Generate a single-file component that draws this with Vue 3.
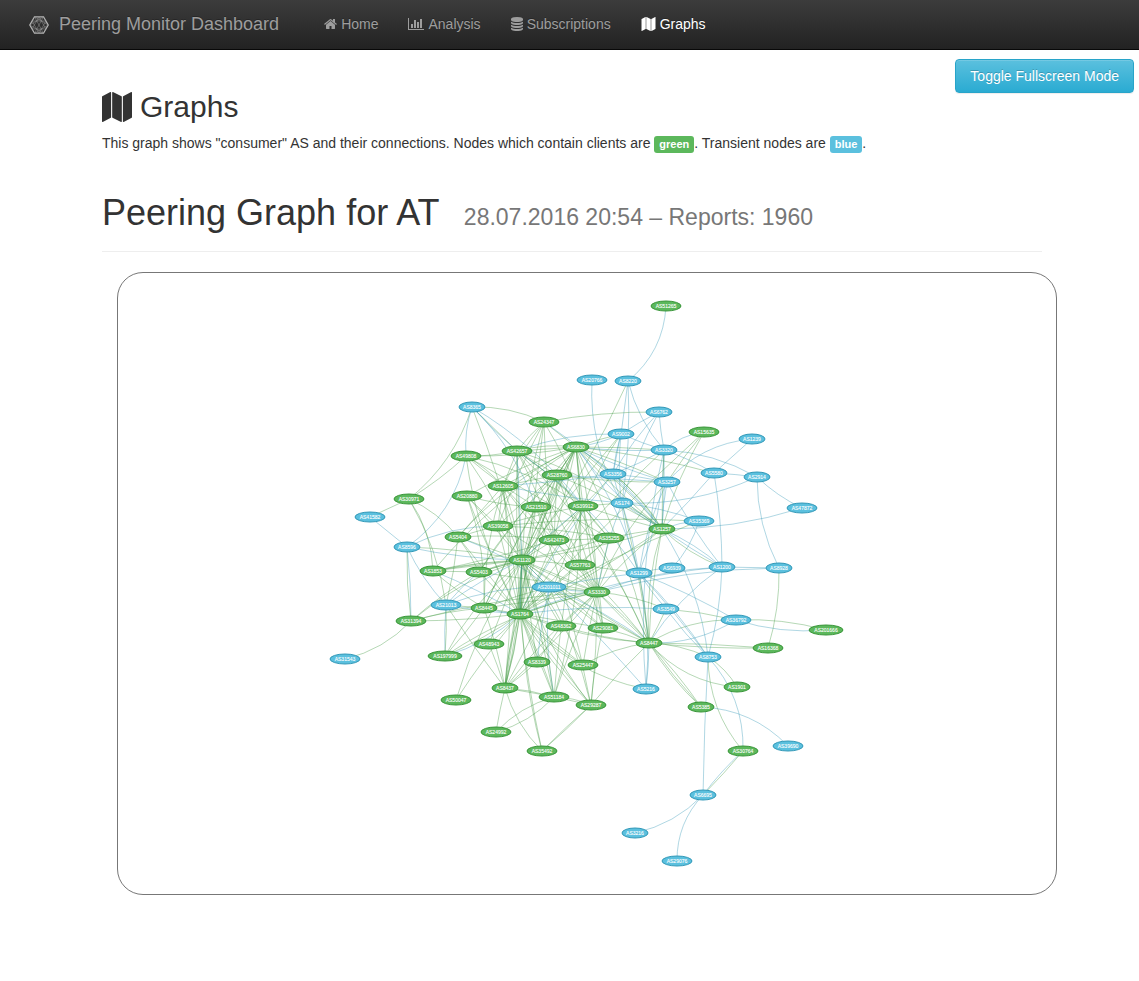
<script setup>
const icons = {
  home: {
    w: 1664, h: 1792, x: 64,
    d: 'M1472 992v480q0 26-19 45t-45 19h-384v-384h-256v384h-384q-26 0-45-19t-19-45v-480q0-1 .5-3t.5-3l575-474 575 474q1 2 1 6zm223-69l-62 74q-8 9-21 11h-3q-13 0-21-7l-692-577-692 577q-12 8-24 7-13-2-21-11l-62-74q-8-10-7-23.5t11-21.5l719-599q32-26 76-26t76 26l244 204v-195q0-14 9-23t23-9h192q14 0 23 9t9 23v408l219 182q10 8 11 21.5t-7 23.5z',
  },
  chart: {
    w: 2048, h: 1792, x: 0,
    d: 'M640 896v512h-256v-512h256zm384-512v1024h-256v-1024h256zm1024 1152v128h-2048v-1536h128v1408h1920zm-640-896v768h-256v-768h256zm384-384v1152h-256v-1152h256z',
  },
  database: {
    w: 1536, h: 1792, x: 128,
    d: 'M896 768q237 0 443-43t325-127v170q0 69-103 128t-280 93.5-385 34.5-385-34.5-280-93.5-103-128v-170q119 84 325 127t443 43zm0 768q237 0 443-43t325-127v170q0 69-103 128t-280 93.5-385 34.5-385-34.5-280-93.5-103-128v-170q119 84 325 127t443 43zm0-384q237 0 443-43t325-127v170q0 69-103 128t-280 93.5-385 34.5-385-34.5-280-93.5-103-128v-170q119 84 325 127t443 43zm0-1152q208 0 385 34.5t280 93.5 103 128v128q0 69-103 128t-280 93.5-385 34.5-385-34.5-280-93.5-103-128v-128q0-69 103-128t280-93.5 385-34.5z',
  },
  map: {
    w: 1792, h: 1792, x: 0,
    d: 'M512 0q13 0 22.5 9.5t9.5 22.5v1472q0 20-17 28l-480 256q-7 4-15 4-13 0-22.5-9.5t-9.5-22.5v-1472q0-20 17-28l480-256q7-4 15-4zM1760 0q13 0 22.5 9.5t9.5 22.5v1472q0 20-17 28l-480 256q-7 4-15 4-13 0-22.5-9.5t-9.5-22.5v-1472q0-20 17-28l480-256q7-4 15-4zM640 0q8 0 14 3l512 256q18 10 18 29v1472q0 13-9.5 22.5t-22.5 9.5q-8 0-14-3l-512-256q-18-10-18-29v-1472q0-13 9.5-22.5t22.5-9.5z',
  },
}

const links = [
  { text: 'Home', icon: icons.home, width: 13 },
  { text: 'Analysis', icon: icons.chart, width: 16 },
  { text: 'Subscriptions', icon: icons.database, width: 12 },
  { text: 'Graphs', icon: icons.map, width: 15, active: true },
]

// kind (g = has clients, b = transit only), AS number, x, y
const nodes = `
g 51265 666 306
b 20766 592 380
b 8220 628 381
b 8365 472 407
b 6762 659 412
g 24347 544 422
g 6830 576 447
b 9002 621 434
b 3320 664 450
g 15635 704 432
b 1239 752 439
b 5580 714 473
b 2914 757 477
b 47872 802 508
b 3356 613 474
b 3257 667 482
b 174 622 503
g 1257 662 529
b 35369 699 521
g 49808 466 456
g 42657 517 451
g 28760 557 475
g 12605 503 486
g 20880 467 496
g 21510 536 507
g 39912 583 506
g 30971 409 499
b 41582 370 517
g 39058 498 526
g 5404 458 537
g 42473 554 540
g 35255 609 538
b 8596 407 547
g 1120 522 560
g 57763 580 565
b 1299 639 573
b 6939 672 568
b 1200 722 567
b 8928 779 568
g 1853 433 571
g 5403 479 572
b 201011 549 587
g 3330 597 592
b 21013 446 605
g 8445 484 608
g 1764 520 614
b 3549 666 609
g 31394 411 621
g 48362 561 626
g 29081 603 628
b 36792 736 620
g 201666 826 630
g 8447 649 643
g 16368 768 648
b 8753 708 657
g 48943 489 644
b 31543 345 659
g 197999 445 656
g 8339 537 662
g 25447 583 665
b 5216 646 689
g 1901 737 687
g 8437 505 688
g 51184 554 697
g 29287 591 705
g 5385 701 707
g 50047 456 700
g 24992 496 732
g 35492 542 751
g 30764 743 751
b 39690 788 746
b 6695 703 795
b 3216 635 833
b 29076 677 861
`.trim().split('\n').map((row) => {
  const [kind, id, x, y] = row.split(' ')
  return { kind, id, x: +x, y: +y, rx: [11, 13, 15, 17][id.length - 3] }
})

const byId = Object.fromEntries(nodes.map((n) => [n.id, n]))

// kind, source, then target:bend pairs; the bend is a share of the edge's length
const edges = `
b 51265 8220:-.22
g 8365 24347:-.12 30971:-.15 42657 1120:-.03
b 8365 49808:.1 42657:.03 21510:-.12 39912:-.1
g 49808 30971:-.05 42657:.06 6830:.05 12605:-.08 39912:-.1 21510:.04 1120:-.06 1764:.1 35255
b 49808 8596:-.2
g 30971 41582 5404:-.12 1853:-.15 21013:-.1
b 41582 8596
b 8596 31394:-.03 21013:.08 1120:.05 39058:-.12
g 8596 31394:.04 1120:-.04
g 31394 31543:-.15 1764:.03 8445:-.05 1120:-.1 5403:-.05 3330:-.06
b 21013 197999:.03 1764:.04 201011:-.1 5403:-.05
g 21013 197999:-.03 8437:.02 5404:.04 8445
g 197999 1764:.05 1120:-.1 3330:-.1 8445:.03
b 197999 1764:.12
g 50047 1764:-.03 1120:-.08
g 24992 8437:-.02 51184:-.14 51184:.14
g 35492 8437:-.13 1764:-.03 1120:-.08 29287:.02 29287:-.02
g 29287 8437:.02 51184:.1 8447:-.03 1764:-.06 1120:-.12 3330:.03 29081:-.04 201011:.05
g 51184 1764:.04 1120:.02 3330:-.04 8437:.06
b 51184 201011:-.07
g 8437 1764:.03 1120:.05 3330:.04 8339:.03 48943:.02 39912:.05
b 5216 8447:.03 1299:.08 201011:.02
g 5216 1764:-.18
g 8447 16368:-.02 8753:-.1 1901:.2 5385:.03 36792:-.15 201011 1764:-.08 1120:-.02 3330:.04 29081:.04 25447:.1 42473:.03 6830:.06 1257:-.1 28760:.04
g 8447 16368:.03 5385:-.04 3330:-.02 1299:.02
g 8447 5385:.07 174:.03 3549:.02
b 8447 36792:.15 1200:-.1
g 36792 201666:-.08 3549:.04
b 36792 201666:.1 1299:.04
b 1200 8928 3330:.08 1257:-.02 5580:.04 1764:.07
b 8928 2914:-.12 3330:.06
g 8928 16368:-.08
g 8753 1901:-.12 30764:.18
b 8753 30764:-.2 6695:.01 1200:.06 1257:.12 1299:.03 3549:-.04
b 30764 6695:.05
g 30764 6695:-.02
b 5385 39690:-.2
b 6695 3216:-.15 29076:.2
b 2914 47872:.08 174:-.12 3320:.12 5580:.02
b 47872 1257:-.08
b 1239 5580 3257:.2
b 5580 1257:-.02 3320:.05
g 5580 6830:.04
g 15635 1257:.06 3257:.03 1764:.02
b 15635 3320:.15
b 3257 1257:.04 1200:.05 3356:.03 6830:-.04 1299:.08
g 3257 6830:.03 3330:.1 28760:-.04
b 35369 174:.06 1257:.08 6939:-.12
g 35369 1764:.06
b 20766 174:.15
b 8220 3356:-.03 3320:.12 174:-.05
g 8220 1120:-.06
g 6762 24347:.05
b 6762 3320:.03 3356:.06 9002:.03 174:.06
b 9002 6830:-.08 3320:.03 3356:.05 1299:.12 42657:.1
g 9002 6830:.03 39912:.06 1120:.02
b 3320 6830:-.04 3356:-.04 1257:-.03 1299:-.1 5216:.08
g 3320 1257:.01 6830:.02 1764:.06
b 3356 1257:-.04 174:.04 1764:.06 6830:.04
g 3356 39912:-.02 1257:-.1
b 174 1299:-.04 1257:.03 12605:-.03 3330:.05
g 174 39912 1257:-.05
g 1257 6830:.05 39912:-.02 35255:.02 3330:.06 1120:-.04 1764:-.03 28760:.04 42657:.09 1200:.1
b 1257 1200:-.08
g 1257 6830:-.04 8447:.04
g 6830 24347 42657 28760 12605 21510 39912 42473 1120:.02 57763:-.04 1853:.08 5403:.03 3330:-.06 8445:.05 1764:.04 8437:.1 51184:-.1 1257:-.12 20880:.05 5404:.1
g 6830 1120:-.03 42657:.1
b 6830 1257:.1 1299:-.1
g 24347 12605:.05 1120:.06 39058:.04 1764 39912:-.06 42657:.05 42473:.03
b 24347 1257:-.08
g 42657 28760 12605 1120:.02 42473:-.04 1764:.02 3330:-.04 39912:-.05 35255:-.08 8447:-.1
b 42657 1120 1299:-.1
g 28760 12605 39058:.04 42473 1120:-.02 1764:.03 3330:-.02 5403:.06
b 28760 3257
g 12605 39058 5404 1120:-.05 42473 1764 3330:.05 8445:.08 8437:-.06
b 12605 3356:.02
g 20880 1120 39058:.02 1764:.03 8445:-.1 21510:.06
g 21510 42473 1120 1764 8445:.03 57763:-.04 29287:-.04
g 39912 42473 1120 35255:.05 3330:.02 1764:.04 51184:.04 29081:-.04 39058:.03
b 39912 1120:.02
g 39058 5404:.02 1120 1764 3330:-.03 35255:-.04
g 39058 35369:-.04
g 5404 1120 5403:-.05 1764 42473:-.05
b 5404 201011:-.08
g 42473 1120 35255:.02 3330:-.02 1764:-.02 1853:-.03
g 35255 1120:-.02 57763:.03 3330 1764
g 1120 1764 57763 3330 8445 5403 1853 48943 8339 8437:-.02 51184:-.06 48362 29081:-.04 25447:-.05 201011
g 1120 1764:.04 3330:.05 1853:.04 5403:.05
g 1120 1764:-.04
b 1120 201011 1764:.02 21013:.05
g 57763 1299 3330 1764 29081:-.03
b 1299 6939:-.06 3549:.04 201011:.02 8753:-.06
g 1853 1120:-.03 8445:.04 5403
b 1853 1764:-.04
g 5403 1120 1764 3330:-.02
g 201011 3330 1764:.02 8445:.03 29081
b 201011 3330:.05 8339:.03 8447:-.06
g 3330 1764:.03 29081 8445 48362 8437:.06 25447:.02 3549:-.08
g 8445 1764 8437:-.04
b 8445 1764:.05
b 3549 1764:.05
g 1764 48362 29081 48943:-.03 8339 25447 8437:-.04 51184 29287
g 1764 25447:.07 8437:.08
g 48362 8339 8447:.05
`.trim().split('\n').flatMap((row) => {
  const [kind, source, ...targets] = row.split(' ')
  return targets.map((target) => {
    const [id, bend = 0] = target.split(':')
    const a = byId[source]
    const b = byId[id]
    const dx = b.x - a.x
    const dy = b.y - a.y
    const cx = (a.x + b.x) / 2 - dy * bend
    const cy = (a.y + b.y) / 2 + dx * bend
    return { kind, d: `M${a.x} ${a.y}Q${cx} ${cy} ${b.x} ${b.y}` }
  })
})

function toggleFullscreen() {
  if (document.fullscreenElement) document.exitFullscreen()
  else document.documentElement.requestFullscreen()
}
</script>

<template>
  <div class="page">
    <nav class="navbar">
      <a class="brand" href="#">
        <svg class="logo" viewBox="0 0 20 18" aria-hidden="true">
          <path class="rim" d="M5.5.8h9L19.2 9l-4.7 8.200h-9L.8 9z" />
          <path class="web" d="M5.5.8L19.2 9 5.5 17.2M14.5.8L.8 9l13.7 8.200M5.5.8l9 16.400M14.5.8l-9 16.400M3 5h14M3 13h14M3 5l7 12M17 5l-7 12M3 13l7-12M17 13L10 1" />
        </svg>
        <span>Peering Monitor Dashboard</span>
      </a>
      <ul class="links">
        <li v-for="link in links" :key="link.text">
          <a href="#" :class="{ active: link.active }">
            <svg
              class="nav-icon"
              :width="link.width"
              height="14"
              :viewBox="`${link.icon.x} 0 ${link.icon.w} ${link.icon.h}`"
              aria-hidden="true"
            ><path :d="link.icon.d" /></svg>
            <span>{{ link.text }}</span>
          </a>
        </li>
      </ul>
    </nav>

    <div class="toolbar">
      <button type="button" class="toggle" @click="toggleFullscreen">Toggle Fullscreen Mode</button>
    </div>

    <main class="content">
      <h2>
        <svg class="title-icon" viewBox="0 0 1792 1792" aria-hidden="true"><path :d="icons.map.d" /></svg>
        <span>Graphs</span>
      </h2>
      <p>
        This graph shows "consumer" AS and their connections. Nodes which contain clients are
        <span class="label green">green</span>. Transient nodes are
        <span class="label blue">blue</span>.
      </p>
      <h1>Peering Graph for AT <small>28.07.2016 20:54 – Reports: 1960</small></h1>

      <div class="graph">
        <svg viewBox="118 273 938 621" role="img" aria-label="Peering graph">
          <path v-for="(edge, i) in edges" :key="i" :class="['edge', edge.kind]" :d="edge.d" />
          <g v-for="node in nodes" :key="node.id" :class="['node', node.kind]">
            <ellipse :cx="node.x" :cy="node.y" :rx="node.rx" ry="5" />
            <text :x="node.x" :y="node.y + 2">AS{{ node.id }}</text>
          </g>
        </svg>
      </div>
    </main>
  </div>
</template>

<style>
body {
  margin: 0;
  background: #fff;
}
</style>

<style scoped>
.page {
  color: #333;
  font: 14px/20px "Liberation Sans", Arial, sans-serif;
}

.navbar {
  display: flex;
  align-items: center;
  box-sizing: border-box;
  min-height: 50px;
  padding: 0 15px 1px 29px;
  border-bottom: 1px solid #080808;
  background: linear-gradient(#3c3c3c, #222);
}

.navbar a {
  display: flex;
  align-items: center;
  color: #9d9d9d;
  text-decoration: none;
  text-shadow: 0 -1px 0 rgba(0, 0, 0, 0.25);
}

.navbar a.active {
  color: #fff;
}

.brand {
  gap: 10px;
  margin-right: 30px;
  font-size: 18px;
}

.logo {
  width: 20px;
  height: 18px;
  margin-top: 2px;
  fill: none;
}

.rim {
  stroke: #b4b4b4;
  stroke-width: 1.3;
}

.web {
  stroke: #999;
  stroke-width: 0.5;
}

.links {
  display: flex;
  margin: 0;
  padding: 0;
  list-style: none;
}

.links a {
  gap: 4px;
  padding: 14px 15px;
}

.nav-icon {
  fill: currentColor;
}

.toolbar {
  display: flex;
  justify-content: flex-end;
  padding: 9px 5px 0;
}

.toggle {
  padding: 6px 14px;
  border: 1px solid #28a4c9;
  border-radius: 4px;
  background: linear-gradient(#5bc0de, #2aabd2);
  box-shadow: inset 0 1px 0 rgba(255, 255, 255, 0.15), 0 1px 1px rgba(0, 0, 0, 0.075);
  color: #fff;
  font: inherit;
  text-shadow: 0 -1px 0 rgba(0, 0, 0, 0.2);
  cursor: pointer;
}

.content {
  max-width: 940px;
  margin: 0 auto;
  padding: 0 0 0 5px;
}

h2 {
  display: flex;
  align-items: center;
  gap: 8px;
  margin: 0 0 12px;
  font-size: 30px;
  font-weight: 400;
  line-height: 28px;
}

.title-icon {
  width: 30px;
  height: 30px;
  margin: -2px 0;
  fill: currentColor;
}

p {
  margin: 0;
}

.label {
  padding: 2px 5px 3px;
  border-radius: 3px;
  color: #fff;
  font-size: 11px;
  font-weight: 700;
  line-height: 11px;
}

.label.green {
  background: #5cb85c;
}

.label.blue {
  background: #5bc0de;
}

h1 {
  margin: 41px 0 20px;
  padding-bottom: 15px;
  border-bottom: 1px solid #eee;
  font-size: 36px;
  font-weight: 400;
  line-height: 38px;
}

h1 small {
  margin-left: 15px;
  color: #777;
  font-size: 23px;
}

.graph {
  margin: 0 -15px 0 15px;
  border: 1px solid #777;
  border-radius: 26px;
}

.graph svg {
  display: block;
  width: 100%;
}

.edge {
  fill: none;
  stroke-width: 1;
}

.edge.g {
  stroke: rgba(62, 153, 62, 0.38);
}

.edge.b {
  stroke: rgba(57, 154, 184, 0.4);
}

.node.g ellipse {
  fill: #5cb85c;
  stroke: #3a963a;
}

.node.b ellipse {
  fill: #5bc0de;
  stroke: #3399b8;
}

.node text {
  fill: #fff;
  stroke: #fff;
  stroke-width: 0.1;
  font-size: 5px;
  text-anchor: middle;
}
</style>
